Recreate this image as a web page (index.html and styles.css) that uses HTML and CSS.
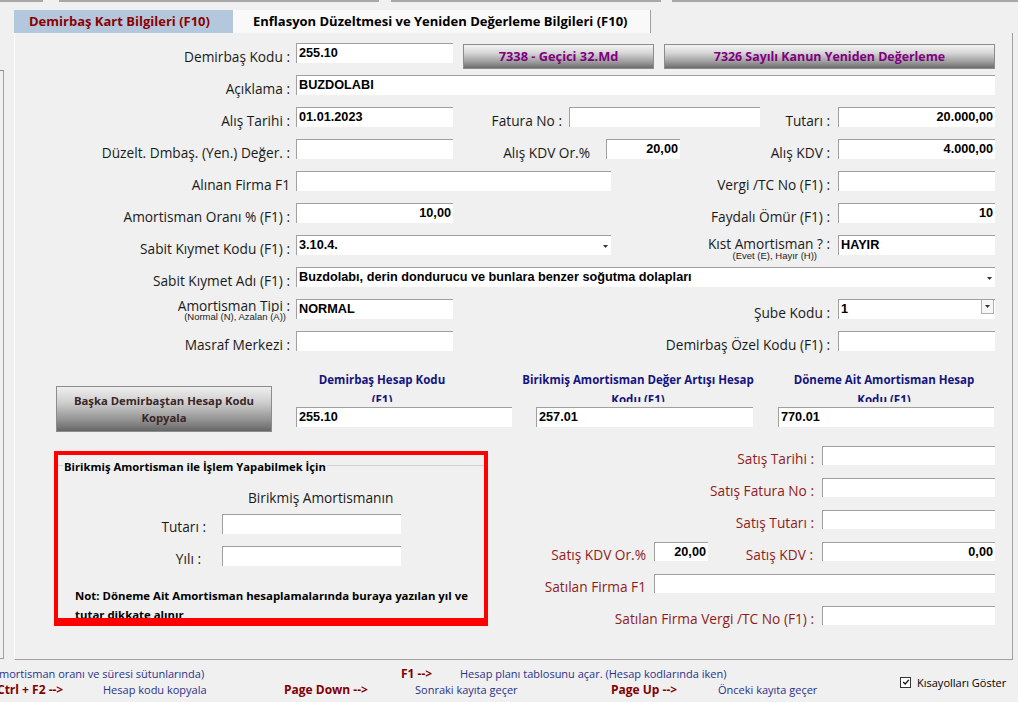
FILE: index.html
```html
<!DOCTYPE html>
<html lang="tr">
<head>
<meta charset="utf-8">
<title>Demirbaş Kart Bilgileri</title>
<link rel="stylesheet" href="styles.css">
</head>
<body>
<div class="topbar"><span class="seg s1"></span><span class="seg s2"></span><span class="seg s3"></span><span class="seg s4"></span></div>
<div class="main">
  <div class="leftstrip"></div>
  <div class="sheet">
    <div class="tabs">
      <div class="tab active">Demirbaş Kart Bilgileri (F10)</div>
      <div class="tab other">Enflasyon Düzeltmesi ve Yeniden Değerleme Bilgileri (F10)</div>
    </div>
    <div class="panel">
      <div class="row">
        <div class="lbl c1">Demirbaş Kodu :</div>
        <div class="inp w157">255.10</div>
        <div class="gbtn b1">7338 - Geçici 32.Md</div>
        <div class="gbtn b2">7326 Sayılı Kanun Yeniden Değerleme</div>
      </div>
      <div class="row">
        <div class="lbl c1">Açıklama :</div>
        <div class="inp w699">BUZDOLABI</div>
      </div>
      <div class="row">
        <div class="lbl c1">Alış Tarihi :</div>
        <div class="inp w157">01.01.2023</div>
        <div class="lbl fat">Fatura No :</div>
        <div class="inp w191"></div>
        <div class="lbl fill">Tutarı :</div>
        <div class="inp w157 num">20.000,00</div>
      </div>
      <div class="row">
        <div class="lbl c1">Düzelt. Dmbaş. (Yen.) Değer. :</div>
        <div class="inp w157"></div>
        <div class="lbl kdvor">Alış KDV Or.%</div>
        <div class="inp w74 num">20,00</div>
        <div class="lbl fill">Alış KDV :</div>
        <div class="inp w157 num">4.000,00</div>
      </div>
      <div class="row">
        <div class="lbl c1">Alınan Firma F1</div>
        <div class="inp w315"></div>
        <div class="lbl fill">Vergi /TC No (F1) :</div>
        <div class="inp w157"></div>
      </div>
      <div class="row">
        <div class="lbl c1">Amortisman Oranı % (F1) :</div>
        <div class="inp w157 num">10,00</div>
        <div class="lbl fill">Faydalı Ömür (F1) :</div>
        <div class="inp w157 num">10</div>
      </div>
      <div class="row">
        <div class="lbl c1">Sabit Kıymet Kodu (F1) :</div>
        <div class="inp combo w315"><span class="ctext">3.10.4.</span><svg class="arr" width="5" height="3" viewBox="0 0 5 3"><path d="M0 0H5L2.5 3Z" fill="#333"/></svg></div>
        <div class="lbl fill two kist">
          <span class="mainl">Kıst Amortisman ? :</span>
          <span class="sub">(Evet (E), Hayır (H))</span>
        </div>
        <div class="inp w157">HAYIR</div>
      </div>
      <div class="row">
        <div class="lbl c1">Sabit Kıymet Adı (F1) :</div>
        <div class="inp combo w699"><span class="ctext">Buzdolabı, derin dondurucu ve bunlara benzer soğutma dolapları</span><svg class="arr" width="5" height="3" viewBox="0 0 5 3"><path d="M0 0H5L2.5 3Z" fill="#333"/></svg></div>
      </div>
      <div class="row">
        <div class="lbl c1 two tipi">
          <span class="mainl">Amortisman Tipi :</span>
          <span class="sub">(Normal (N), Azalan (A))</span>
        </div>
        <div class="inp w157">NORMAL</div>
        <div class="lbl fill">Şube Kodu :</div>
        <div class="inp combo w157"><span class="ctext">1</span><span class="ddbtn"><svg width="5" height="3" viewBox="0 0 5 3"><path d="M0 0H5L2.5 3Z" fill="#333"/></svg></span></div>
      </div>
      <div class="row">
        <div class="lbl c1">Masraf Merkezi :</div>
        <div class="inp w157"></div>
        <div class="lbl fill">Demirbaş Özel Kodu (F1) :</div>
        <div class="inp w157"></div>
      </div>

      <div class="acct">
        <div class="copybtn">Başka Demirbaştan Hesap Kodu<br>Kopyala</div>
        <div class="acol a1">
          <div class="ahead h1">Demirbaş Hesap Kodu<br>(F1)</div>
          <div class="inp">255.10</div>
        </div>
        <div class="acol a2">
          <div class="ahead h2">Birikmiş Amortisman Değer Artışı Hesap<br>Kodu (F1)</div>
          <div class="inp">257.01</div>
        </div>
        <div class="acol a3">
          <div class="ahead h3">Döneme Ait Amortisman Hesap<br>Kodu (F1)</div>
          <div class="inp">770.01</div>
        </div>
      </div>

      <div class="lower">
        <div class="redbox">
          <div class="gbhead"><span>Birikmiş Amortisman ile İşlem Yapabilmek İçin</span></div>
          <div class="bah">Birikmiş Amortismanın</div>
          <div class="brow r1"><div class="lbl bl1">Tutarı :</div><div class="inp w179"></div></div>
          <div class="brow r2"><div class="lbl bl2">Yılı :</div><div class="inp w179"></div></div>
          <div class="note">Not: Döneme Ait Amortisman hesaplamalarında buraya yazılan yıl ve<br>tutar dikkate alınır</div>
        </div>
        <div class="sales">
          <div class="srow"><div class="lbl fill red">Satış Tarihi :</div><div class="inp w173"></div></div>
          <div class="srow"><div class="lbl fill red">Satış Fatura No :</div><div class="inp w173"></div></div>
          <div class="srow"><div class="lbl fill red">Satış Tutarı :</div><div class="inp w173"></div></div>
          <div class="srow"><div class="lbl fill red">Satış KDV Or.%</div><div class="inp w54 num">20,00</div><div class="lbl red skdv">Satış KDV :</div><div class="inp w173 num">0,00</div></div>
          <div class="srow"><div class="lbl fill red">Satılan Firma F1</div><div class="inp w341"></div></div>
          <div class="srow"><div class="lbl fill red">Satılan Firma Vergi /TC No (F1) :</div><div class="inp w173"></div></div>
        </div>
      </div>
    </div>
  </div>
</div>
<div class="status">
  <div class="keys">
    <div class="kl"><span class="t k0">mortisman oranı ve süresi sütunlarında)</span><span class="k kf1">F1 --&gt;</span><span class="t">Hesap planı tablosunu açar. (Hesap kodlarında iken)</span></div>
    <div class="kl"><span class="k kc">Ctrl + F2 --&gt;</span><span class="t kw1">Hesap kodu kopyala</span><span class="k kw2">Page Down --&gt;</span><span class="t kw3">Sonraki kayıta geçer</span><span class="k kw4">Page Up --&gt;</span><span class="t">Önceki kayıta geçer</span></div>
  </div>
  <div class="chk">
    <span class="box"><svg width="8" height="8" viewBox="0 0 8 8"><path d="M1.2 4L3.2 6L6.8 1.8" fill="none" stroke="#111" stroke-width="1.3"/></svg></span>
    <span class="chklbl">Kısayolları Göster</span>
  </div>
</div>
</body>
</html>
```

FILE: styles.css
```css
* { box-sizing: border-box; margin: 0; padding: 0; }
html, body { width: 1018px; height: 702px; overflow: hidden; }
body {
  background: #f0f0f0;
  font-family: "Open Sans", "Noto Sans", sans-serif;
  font-size: 13.7px;
  color: #1a1a1a;
}

/* top strip */
.topbar { display: flex; height: 2px; }
.seg { height: 2px; background: #a8a8a8; }
.s1 { width: 43px; }
.s2 { width: 320px; margin-left: 16px; }
.s3 { width: 270px; margin-left: 12px; }
.s4 { flex: 1; margin-left: 11px; }

.main { display: flex; height: 658px; }
.leftstrip {
  width: 4px; height: 589px; margin-top: 68px;
  border-top: 1px solid #8a8a8a; border-right: 1px solid #a0a0a0; border-bottom: 1px solid #a0a0a0;
}
.sheet { margin-left: 10px; width: 999px; padding-top: 8px; }

/* tabs */
.tabs { display: flex; height: 23px; }
.tab { height: 23px; line-height: 23px; font-weight: 700; font-size: 13px; white-space: nowrap; }
.tab.active { width: 219px; background: #b4c8dd; color: #8b0000; padding-left: 15px; }
.tab.other { width: 418px; background: #f9f9f9; color: #000; padding-left: 20px; border-right: 1px solid #a0a0a0; }

/* panel */
.panel {
  height: 627px;
  border-left: 1px solid #fff;
  border-right: 1px solid #a0a0a0;
  border-bottom: 1px solid #a0a0a0;
  padding-top: 10px;
  padding-right: 17px;
}
.row { display: flex; height: 32px; align-items: flex-start; }
.lbl { line-height: 20px; padding-top: 4px; white-space: nowrap; text-align: right; }
.c1 { width: 281px; padding-right: 6px; }
.fill { flex: 1; padding-right: 8px; }
.fat { width: 116px; padding-right: 7px; }
.kdvor { width: 153px; padding-right: 16px; }

.inp {
  height: 20px;
  background: #fff;
  border-top: 1px solid #a0a0a0;
  border-left: 1px solid #a0a0a0;
  font: 700 12.7px/19px "Liberation Sans", Arial, sans-serif;
  color: #000;
  padding: 0 2px;
  white-space: nowrap;
  overflow: hidden;
}
.num { text-align: right; }
.w54 { width: 54px; }
.w74 { width: 74px; }
.w157 { width: 157px; }
.w173 { width: 173px; }
.w179 { width: 179px; }
.w191 { width: 191px; }
.w315 { width: 315px; }
.w341 { width: 341px; }
.w699 { width: 699px; }

.combo { display: flex; align-items: center; padding-right: 3px; }
.ctext { flex: 1; overflow: hidden; }
.arr { flex: none; margin-top: 1px; }
.ddbtn {
  flex: none; align-self: flex-start;
  width: 13px; height: 15px; margin-top: -1px; margin-right: -2px;
  border: 1px solid #b0b0b0; background: #f6f6f6;
  display: flex; align-items: center; justify-content: center;
}

/* two-line labels */
.two { display: flex; flex-direction: column; align-items: flex-end; line-height: 16px; }
.two .sub { font: 9.5px/10px "Liberation Sans", Arial, sans-serif; color: #222; }
.kist { padding-top: 1px; }
.kist .sub { margin-top: -1px; margin-right: 13px; }
.tipi { padding-top: 0; }
.tipi .mainl { display: block; height: 14px; overflow: hidden; margin-top: -1px; }
.tipi .sub { margin-right: 4px; }

/* buttons */
.gbtn {
  height: 25px; margin-top: 1px; margin-left: 10px;
  border: 1px solid #8c8c8c;
  background: linear-gradient(#f4f4f4, #d6d6d6 35%, #9a9a9a 75%, #6c6c6c);
  color: #800080; font-weight: 700; font-size: 12.8px;
  line-height: 23px; text-align: center; white-space: nowrap;
}
.b1 { width: 191px; }
.b2 { width: 331px; font-size: 12.4px; }

/* account codes */
.acct { display: flex; align-items: flex-start; height: 64px; }
.copybtn {
  width: 216px; height: 46px; margin-left: 41px; margin-top: 23px;
  border: 1px solid #8c8c8c;
  background: linear-gradient(#eeeeee, #cfcfcf 35%, #929292 75%, #666666);
  color: #3a2626; font-weight: 700; font-size: 11.3px; line-height: 17px;
  text-align: center; display: flex; align-items: center; justify-content: center;
}
.acol { display: flex; flex-direction: column; }
.acol .inp { width: 100%; margin-top: 5px; }
.a1 { width: 216px; margin-left: 24px; }
.a2 { width: 217px; margin-left: 24px; }
.a3 { width: 216px; margin-left: 25px; }
.ahead {
  width: 276px; height: 32px; margin-top: 7px; overflow: hidden;
  color: #14147e; font-weight: 700; font-size: 11.5px; line-height: 20px;
  text-align: center; white-space: nowrap;
}
.h1 { margin-left: -52px; }
.h2 { margin-left: -36px; }
.h3 { margin-left: -32px; }

/* lower section */
.lower { display: flex; align-items: flex-start; }
.redbox {
  width: 434px; height: 175px; margin-left: 39px; margin-top: 24px;
  border: 4px solid #ff0000; border-bottom-width: 8px;
  overflow: hidden;
}
.gbhead {
  display: flex; align-items: center; height: 14px; margin-top: 5px;
  font-weight: 700; font-size: 11.25px; color: #000; white-space: nowrap;
}
.gbhead::before { content: ""; width: 5px; border-top: 1px solid #d0d0d0; margin-bottom: 4px; }
.gbhead::after { content: ""; flex: 1; border-top: 1px solid #d0d0d0; margin-bottom: 4px; }
.gbhead span { padding: 0 1px; line-height: 14px; }
.bah { margin-top: 14px; padding-left: 190px; line-height: 20px; white-space: nowrap; }
.brow { display: flex; height: 20px; }
.r1 { margin-top: 6px; }
.r2 { margin-top: 12px; }
.brow .lbl { width: 164px; padding-top: 3px; }
.bl1 { padding-right: 16px; }
.bl2 { padding-right: 21px; }
.note {
  margin-top: 20px; padding-left: 17px;
  font-weight: 700; font-size: 11.4px; line-height: 19px; color: #000; white-space: nowrap;
}

.sales { flex: 1; margin-top: 19px; }
.srow { display: flex; height: 32px; align-items: flex-start; }
.srow .inp { height: 19px; line-height: 18px; }
.srow .lbl { padding-top: 3px; }
.red { color: #8e1c1c; }
.skdv { width: 114px; padding-right: 9px; }

/* status */
.status { display: flex; align-items: center; height: 42px; }
.keys { width: 900px; padding-top: 6px; height: 42px; }
.kl { display: flex; height: 16px; line-height: 16px; font-size: 11px; white-space: nowrap; }
.t { color: #28328c; }
.k { color: #800000; font-weight: 700; font-size: 12px; }
.k0 { width: 402px; margin-left: -1px; }
.kf1 { width: 59px; }
.kc { width: 106px; margin-left: -3px; }
.kw1 { width: 181px; }
.kw2 { width: 131px; }
.kw3 { width: 196px; }
.kw4 { width: 107px; }
.chk { display: flex; align-items: center; margin-top: 2px; }
.box {
  width: 11px; height: 11px; border: 1px solid #333; background: #fff;
  display: flex; align-items: center; justify-content: center;
}
.chklbl { margin-left: 6px; font-size: 11px; color: #000; }
```
